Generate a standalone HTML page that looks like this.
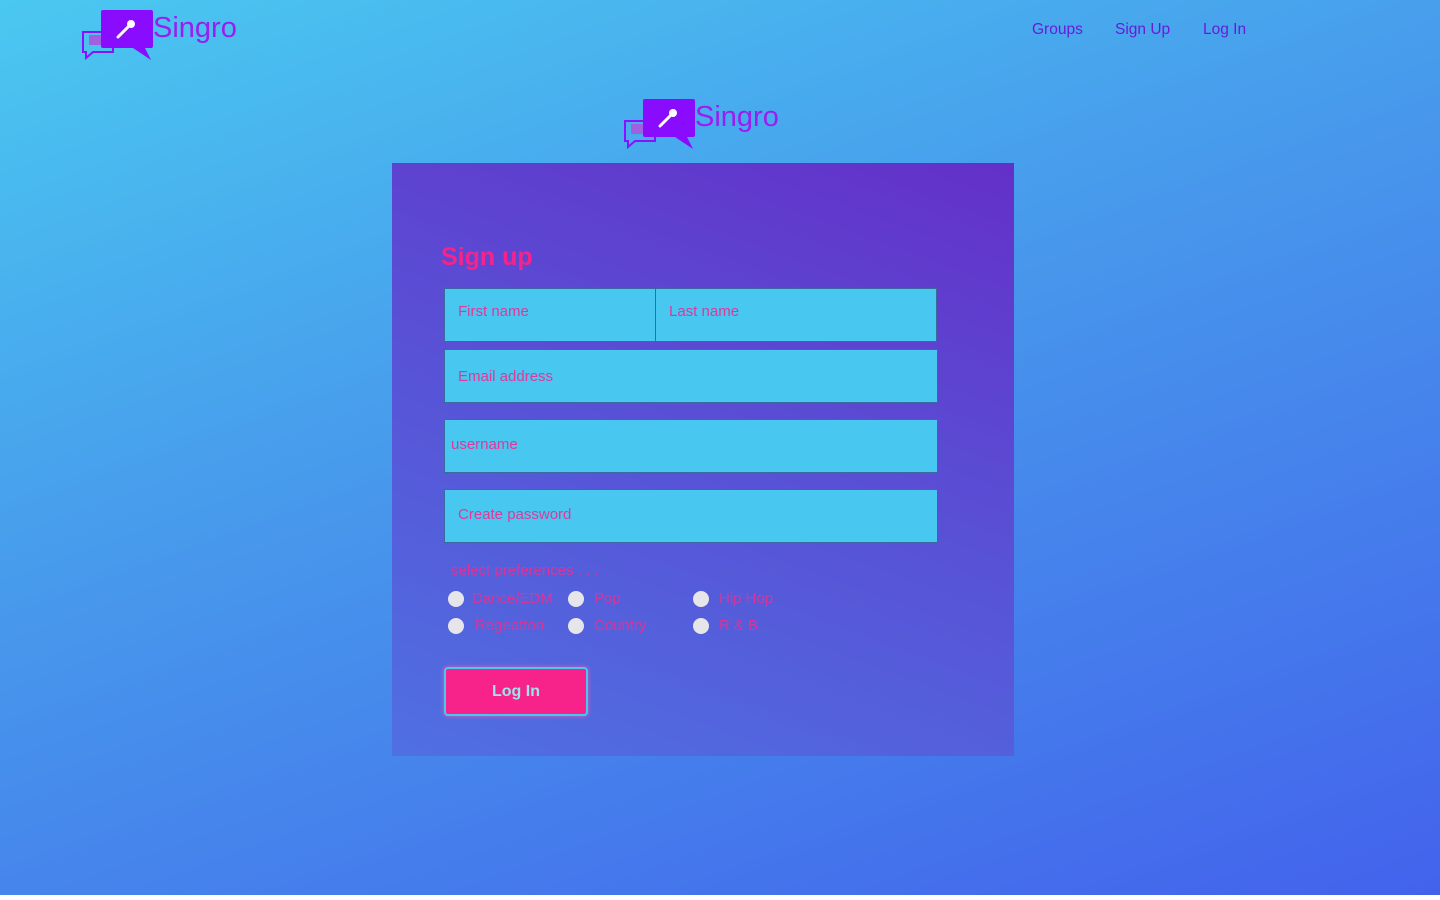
<!DOCTYPE html>
<html><head><style>
*{margin:0;padding:0;box-sizing:border-box}
body{width:1440px;height:900px;background:#fff;font-family:"Liberation Sans",sans-serif;position:relative;overflow:hidden}
.bg{position:absolute;left:0;top:0;width:1440px;height:895px;background:linear-gradient(160deg,#4ac8f0 0%,#4797ec 45%,#4362ec 100%)}
.logo{position:absolute;width:170px;height:62px}
.logo span{position:absolute;left:72px;top:2px;font-size:29px;color:#9a1ef2}
nav a{position:absolute;top:21px;font-size:15.5px;color:#6a1bd8;text-decoration:none}
.card{position:absolute;left:392px;top:163px;width:622px;height:593px;background:linear-gradient(200deg,#6430c8 0%,#5852d6 50%,#4f70e2 100%)}
h1{position:absolute;left:49px;top:80px;font-size:25px;color:#f7238a;font-weight:bold}
.in{position:absolute;background:#48c8f0;border:1px solid #3a6aa0;color:#e0389a;font-size:15px;padding-left:13px;display:flex;align-items:center}
.pref{position:absolute;color:#d8359a;font-size:15px}
.dot{position:absolute;width:16px;height:16px;border-radius:50%;background:#e6e6ea}
.btn{position:absolute;left:52px;top:504px;width:144px;height:49px;background:#f7238a;border:2px solid #48c8f0;border-radius:4px;color:#9de4ec;font-weight:bold;font-size:16px;display:flex;align-items:center;justify-content:center;box-shadow:0 0 4px #e060b0}
</style></head><body>
<div class="bg"></div>
<svg width="0" height="0" style="position:absolute"><defs><g id="lg">
<path d="M2 22 h30 v20 h-20 l-7 6 v-6 h-3 z" fill="none" stroke="#8a10ff" stroke-width="2"/>
<rect x="8" y="25" width="14" height="10" fill="#a060e0"/>
<path d="M22 0 h48 a2 2 0 0 1 2 2 v34 a2 2 0 0 1 -2 2 h-6 l6 12 l-18 -12 h-30 a2 2 0 0 1 -2 -2 v-34 a2 2 0 0 1 2 -2z" fill="#8a0cff"/>
<path d="M37 27 l10 -10" stroke="#fff" stroke-width="3" stroke-linecap="round"/><circle cx="50" cy="14" r="4" fill="#fff"/>
</g></defs></svg>
<div class="logo" style="left:81px;top:10px"><svg width="75" height="52"><use href="#lg"/></svg><span>Singro</span></div>
<div class="logo" style="left:623px;top:99px"><svg width="75" height="52"><use href="#lg"/></svg><span>Singro</span></div>
<nav><a style="left:1032px">Groups</a><a style="left:1115px">Sign Up</a><a style="left:1203px">Log In</a></nav>
<div class="card">
<h1>Sign up</h1>
<div class="in" style="left:52px;top:125px;width:212px;height:54px;padding-bottom:8px">First name</div>
<div class="in" style="left:263px;top:125px;width:282px;height:54px;padding-bottom:8px">Last name</div>
<div class="in" style="left:52px;top:186px;width:494px;height:54px">Email address</div>
<div class="in" style="left:52px;top:256px;width:494px;height:54px;padding-left:6px;padding-bottom:4px">username</div>
<div class="in" style="left:52px;top:326px;width:494px;height:54px;padding-bottom:4px">Create password</div>
<div class="pref" style="left:59px;top:399px">select preferences . . .</div>
<div class="dot" style="left:56px;top:428px"></div><div class="pref" style="left:80px;top:427px">Dance/EDM</div>
<div class="dot" style="left:176px;top:428px"></div><div class="pref" style="left:202px;top:427px">Pop</div>
<div class="dot" style="left:301px;top:428px"></div><div class="pref" style="left:327px;top:427px">Hip Hop</div>
<div class="dot" style="left:56px;top:455px"></div><div class="pref" style="left:83px;top:454px">Regeatton</div>
<div class="dot" style="left:176px;top:455px"></div><div class="pref" style="left:202px;top:454px">Country</div>
<div class="dot" style="left:301px;top:455px"></div><div class="pref" style="left:327px;top:454px">R &amp; B</div>
<div class="btn">Log In</div>
</div>
</body></html>
